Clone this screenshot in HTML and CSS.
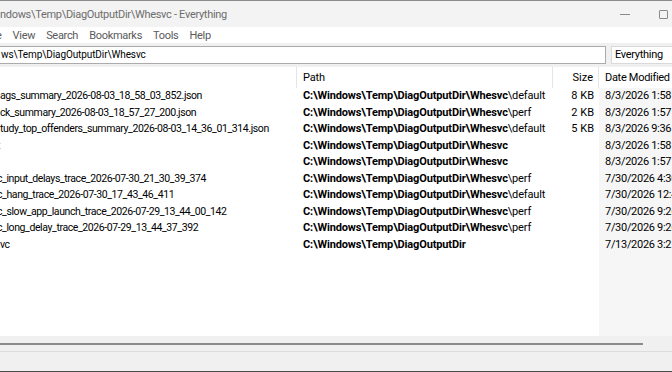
FILE: index.html
```html
<!DOCTYPE html>
<html lang="en">
<head>
    <meta charset="UTF-8">
    <title>C:\Windows\Temp\DiagOutputDir\Whesvc - Everything</title>
    <link rel="stylesheet" href="styles.css">
</head>
<body>
    <div class="window">
        <!-- TITLE BAR -->
        <div class="titlebar">
            <span class="title">ndows\Temp\DiagOutputDir\Whesvc - Everything</span>
            <div class="controls">
                <span class="minimize"></span>
                <span class="maximize"></span>
            </div>
        </div>

        <!-- MENU -->
        <div class="menubar">
            <span class="menu-item cut">e</span>
            <span class="menu-item">View</span>
            <span class="menu-item">Search</span>
            <span class="menu-item">Bookmarks</span>
            <span class="menu-item">Tools</span>
            <span class="menu-item">Help</span>
        </div>

        <!-- SEARCH -->
        <div class="toolbar">
            <div class="search">ws\Temp\DiagOutputDir\Whesvc</div>
            <div class="filter">Everything</div>
        </div>

        <!-- RESULTS -->
        <div class="list">
            <div class="row header">
                <div class="cell name"></div>
                <div class="cell path">Path</div>
                <div class="cell size">Size</div>
                <div class="cell date">Date Modified</div>
            </div>

            <div class="row">
                <div class="cell name">ags_summary_2026-08-03_18_58_03_852.json</div>
                <div class="cell path"><b>C:\Windows\Temp\DiagOutputDir\Whesvc</b>\default</div>
                <div class="cell size">8 KB</div>
                <div class="cell date">8/3/2026 1:58 PM</div>
            </div>
            <div class="row">
                <div class="cell name">ck_summary_2026-08-03_18_57_27_200.json</div>
                <div class="cell path"><b>C:\Windows\Temp\DiagOutputDir\Whesvc</b>\perf</div>
                <div class="cell size">2 KB</div>
                <div class="cell date">8/3/2026 1:57 PM</div>
            </div>
            <div class="row">
                <div class="cell name">tudy_top_offenders_summary_2026-08-03_14_36_01_314.json</div>
                <div class="cell path"><b>C:\Windows\Temp\DiagOutputDir\Whesvc</b>\default</div>
                <div class="cell size">5 KB</div>
                <div class="cell date">8/3/2026 9:36 AM</div>
            </div>
            <div class="row">
                <div class="cell name cut">t</div>
                <div class="cell path"><b>C:\Windows\Temp\DiagOutputDir\Whesvc</b></div>
                <div class="cell size"></div>
                <div class="cell date">8/3/2026 1:58 PM</div>
            </div>
            <div class="row">
                <div class="cell name"></div>
                <div class="cell path"><b>C:\Windows\Temp\DiagOutputDir\Whesvc</b></div>
                <div class="cell size"></div>
                <div class="cell date">8/3/2026 1:57 PM</div>
            </div>
            <div class="row">
                <div class="cell name cut">c_input_delays_trace_2026-07-30_21_30_39_374</div>
                <div class="cell path"><b>C:\Windows\Temp\DiagOutputDir\Whesvc</b>\perf</div>
                <div class="cell size"></div>
                <div class="cell date">7/30/2026 4:30 PM</div>
            </div>
            <div class="row">
                <div class="cell name cut">c_hang_trace_2026-07-30_17_43_46_411</div>
                <div class="cell path"><b>C:\Windows\Temp\DiagOutputDir\Whesvc</b>\default</div>
                <div class="cell size"></div>
                <div class="cell date">7/30/2026 12:43 PM</div>
            </div>
            <div class="row">
                <div class="cell name cut">c_slow_app_launch_trace_2026-07-29_13_44_00_142</div>
                <div class="cell path"><b>C:\Windows\Temp\DiagOutputDir\Whesvc</b>\perf</div>
                <div class="cell size"></div>
                <div class="cell date">7/30/2026 9:26 AM</div>
            </div>
            <div class="row">
                <div class="cell name cut">c_long_delay_trace_2026-07-29_13_44_37_392</div>
                <div class="cell path"><b>C:\Windows\Temp\DiagOutputDir\Whesvc</b>\perf</div>
                <div class="cell size"></div>
                <div class="cell date">7/30/2026 9:26 AM</div>
            </div>
            <div class="row">
                <div class="cell name">vc</div>
                <div class="cell path"><b>C:\Windows\Temp\DiagOutputDir</b></div>
                <div class="cell size"></div>
                <div class="cell date">7/13/2026 3:21 PM</div>
            </div>
        </div>

        <!-- HORIZONTAL SCROLLBAR -->
        <div class="hscroll">
            <div class="thumb"></div>
        </div>

        <!-- STATUS BAR -->
        <div class="statusbar"></div>
    </div>
</body>
</html>
```

FILE: styles.css
```css
body {
    margin: 0;
    padding: 0;
    overflow: hidden;
    font-family: Roboto, sans-serif;
    font-size: 11px;
    letter-spacing: -0.3px;
    color: #000;
    background: #fff;
}

.window {
    width: 672px;
    height: 372px;
    display: flex;
    flex-direction: column;
}

/* Title bar */
.titlebar {
    height: 26px;
    border-top: 1px solid #8c8c8c;
    background: #f3f3f3;
    display: flex;
    justify-content: space-between;
    align-items: center;
}

.title {
    color: #6d6d6d;
    white-space: nowrap;
}

.controls {
    display: flex;
    align-items: center;
    gap: 29px;
    padding-right: 4px;
}

.minimize {
    width: 10px;
    height: 1px;
    background: #8a8a8a;
}

.maximize {
    width: 7px;
    height: 7px;
    border: 1px solid #8a8a8a;
    border-radius: 1px;
}

/* Menu */
.menubar {
    height: 16px;
    background: #fff;
    display: flex;
    align-items: center;
    color: #5a5a5a;
}

.menu-item {
    padding: 0 6px 0 5px;
}

.menu-item.cut {
    padding: 0 6px 0 0;
    margin-left: -4px;
}

/* Toolbar */
.toolbar {
    height: 24px;
    background: #f0f0f0;
    display: flex;
    align-items: center;
    gap: 5px;
}

.search {
    width: 604px;
    height: 16px;
    margin-left: -1px;
    padding-left: 1px;
    background: #fff;
    border: 1px solid #ababab;
    font-size: 10px;
    letter-spacing: -0.1px;
    line-height: 16px;
    white-space: nowrap;
    overflow: hidden;
}

.filter {
    flex: 1;
    height: 16px;
    margin-right: -4px;
    padding-left: 3px;
    background: #fff;
    border: 1px solid #d9d9d9;
    line-height: 16px;
}

/* Results list */
.list {
    flex: 1;
    background: linear-gradient(to right, #fff 599px, #f6f6f6 599px);
}

.row {
    display: grid;
    grid-template-columns: 297px 256px 46px 1fr;
    height: 16.5px;
    line-height: 16.5px;
    white-space: nowrap;
}

.row.header {
    height: 21px;
    line-height: 21px;
    background: #fff;
}

.header .cell {
    border-right: 1px solid #e5e5e5;
}

.header .date {
    border-right: none;
}

.cell {
    overflow: hidden;
}

.name {
    font-size: 10.5px;
    letter-spacing: -0.4px;
}

.name.cut {
    text-indent: -3px;
}

.path {
    padding-left: 6px;
    letter-spacing: -0.15px;
}

.path b {
    font-weight: bold;
}

.size {
    text-align: right;
    padding-right: 5px;
    letter-spacing: 0;
}

.date {
    padding-left: 6px;
}

/* Scrollbar */
.hscroll {
    height: 15px;
    background: #f0f0f0;
    border-bottom: 1px solid #dcdcdc;
    display: flex;
    align-items: center;
}

.thumb {
    width: 643px;
    height: 2px;
    background: #8a8a8a;
}

/* Status bar */
.statusbar {
    flex: 0 0 19px;
    background: #f0f0f0;
    border-bottom: 1px solid #4a4a4a;
}
```
